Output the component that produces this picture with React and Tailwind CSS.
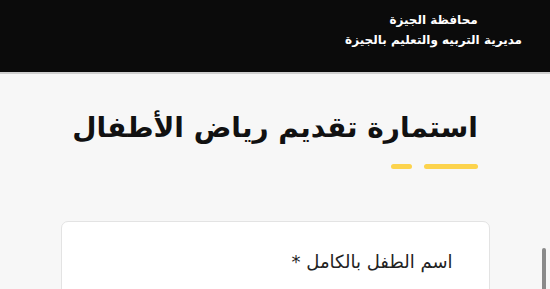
export default function App() {
  return (
    <div dir="rtl" className="relative h-[289px] overflow-hidden bg-[#f7f7f7]" style={{ fontFamily: '"DejaVu Sans", "Noto Sans", sans-serif' }}>
      <header className="h-[74px] bg-[#0b0b0b] border-b-2 border-[#cfcfcf] flex flex-col items-start pr-[28px] pt-[10px]">
        <div className="flex flex-col items-center text-white font-bold leading-[20px]">
          <span className="text-[12px]">محافظة الجيزة</span>
          <span className="text-[12px]">مديرية التربيه والتعليم بالجيزة</span>
        </div>
      </header>
      <main className="flex flex-col items-center">
        <h1 className="mt-[34px] text-[28px] font-bold text-[#111] leading-[40px]">استمارة تقديم رياض الأطفال</h1>
        <div className="mt-[16px] flex gap-[12px] w-full justify-start pr-[72px]">
          <span className="h-[5px] w-[54px] rounded-full bg-[#fcd34d]"></span>
          <span className="h-[5px] w-[21px] rounded-full bg-[#fcd34d]"></span>
        </div>
        <div className="mt-[52px] w-[429px] rounded-[7px] border border-[#e3e3e3] bg-white pr-[36px] pt-[26px] h-[120px]">
          <div className="text-[18px] text-[#222]">اسم الطفل بالكامل *</div>
        </div>
      </main>
      <div className="absolute right-[4px] top-[248px] h-[60px] w-[4px] rounded-t-sm bg-[#8a8a8a]"></div>
    </div>
  );
}
